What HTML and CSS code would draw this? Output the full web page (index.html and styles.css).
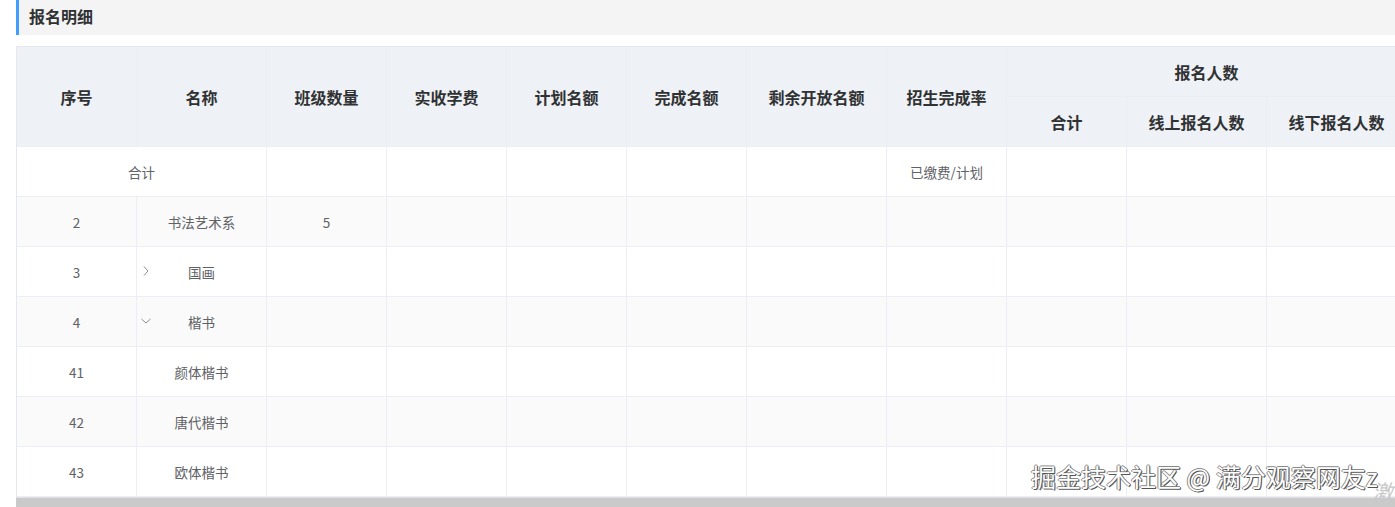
FILE: index.html
```html
<!DOCTYPE html>
<html lang="zh-CN">
<head>
<meta charset="utf-8">
<title>报名明细</title>
<link rel="stylesheet" href="styles.css">
</head>
<body>
<div class="page">
  <div class="title-bar"><span class="title">报名明细</span></div>
  <div class="table-wrap">
    <table class="grid">
      <colgroup>
        <col class="w120"><col class="w130"><col class="w120"><col class="w120"><col class="w120"><col class="w120"><col class="w140"><col class="w120"><col class="w120"><col class="w140"><col class="w140">
      </colgroup>
      <thead>
        <tr>
          <th rowspan="2">序号</th>
          <th rowspan="2">名称</th>
          <th rowspan="2">班级数量</th>
          <th rowspan="2">实收学费</th>
          <th rowspan="2">计划名额</th>
          <th rowspan="2">完成名额</th>
          <th rowspan="2">剩余开放名额</th>
          <th rowspan="2">招生完成率</th>
          <th colspan="3">报名人数</th>
        </tr>
        <tr>
          <th>合计</th>
          <th>线上报名人数</th>
          <th>线下报名人数</th>
        </tr>
      </thead>
      <tbody>
        <tr>
          <td colspan="2">合计</td>
          <td></td><td></td><td></td><td></td><td></td>
          <td>已缴费/计划</td>
          <td></td><td></td><td></td>
        </tr>
        <tr class="stripe">
          <td>2</td>
          <td class="name">书法艺术系</td>
          <td>5</td>
          <td></td><td></td><td></td><td></td><td></td><td></td><td></td><td></td>
        </tr>
        <tr>
          <td>3</td>
          <td class="name"><svg class="chev" width="12" height="12" viewBox="0 0 12 12"><path d="M4 1.5 L8 6 L4 10.5" fill="none" stroke="#8a8d93" stroke-width="1"/></svg>国画</td>
          <td></td><td></td><td></td><td></td><td></td><td></td><td></td><td></td><td></td>
        </tr>
        <tr class="stripe">
          <td>4</td>
          <td class="name"><svg class="chev" width="12" height="12" viewBox="0 0 12 12"><path d="M1.5 4 L6 8 L10.5 4" fill="none" stroke="#8a8d93" stroke-width="1"/></svg>楷书</td>
          <td></td><td></td><td></td><td></td><td></td><td></td><td></td><td></td><td></td>
        </tr>
        <tr>
          <td>41</td>
          <td class="name">颜体楷书</td>
          <td></td><td></td><td></td><td></td><td></td><td></td><td></td><td></td><td></td>
        </tr>
        <tr class="stripe">
          <td>42</td>
          <td class="name">唐代楷书</td>
          <td></td><td></td><td></td><td></td><td></td><td></td><td></td><td></td><td></td>
        </tr>
        <tr>
          <td>43</td>
          <td class="name">欧体楷书</td>
          <td></td><td></td><td></td><td></td><td></td><td></td><td></td><td></td><td></td>
        </tr>
      </tbody>
    </table>
  </div>
  <div class="scrollbar"></div>
</div>
<div class="watermark">掘金技术社区 @ 满分观察网友z</div>
<div class="os-mark">激活</div>
</body>
</html>
```

FILE: styles.css
```css
html, body {
  margin: 0;
  padding: 0;
  background: #ffffff;
  overflow: hidden;
}
body {
  font-family: "Noto Sans CJK SC", "Microsoft YaHei", sans-serif;
  width: 1395px;
  height: 507px;
  position: relative;
}
.page {
  padding-left: 16px;
}
.title-bar {
  height: 35px;
  background: #f4f4f5;
  border-left: 3px solid #409eff;
  display: flex;
  align-items: center;
  padding-left: 10px;
  margin-bottom: 11px;
}
.title {
  font-size: 16px;
  font-weight: 700;
  color: #303133;
  margin-top: -4px;
}
.table-wrap {
  overflow: hidden;
  width: 1379px;
}
.grid {
  border-collapse: separate;
  border-spacing: 0;
  table-layout: fixed;
  width: 1390px;
  border-top: 1px solid #e4e7ed;
  border-left: 1px solid #e4e7ed;
}
.w120 { width: 120px; }
.w130 { width: 130px; }
.w140 { width: 140px; }
.grid th,
.grid td {
  border-right: 1px solid #ebeef5;
  border-bottom: 1px solid #ebeef5;
  padding: 0;
  text-align: center;
  box-sizing: border-box;
}
.grid thead tr {
  height: 50px;
}
.grid th {
  background: #eef1f6;
  font-size: 16px;
  font-weight: 700;
  color: #303133;
}
.grid tbody tr {
  height: 50px;
}
.grid td {
  font-size: 13.5px;
  color: #606266;
  background: #ffffff;
}
.grid tr.stripe td {
  background: #fafafa;
}
.grid td.name {
  position: relative;
}
.chev {
  position: absolute;
  left: 3px;
  top: 18px;
}
.scrollbar {
  height: 12px;
  background: #cacaca;
  border-top: 1px solid #e2e2e2;
}
.watermark {
  position: absolute;
  left: 1031px;
  top: 458px;
  font-size: 25px;
  color: #ffffff;
  white-space: nowrap;
  text-shadow: 1px 1px 0 #555, -1px 0 0 #888, 0 -1px 0 #888, 1px 0 0 #666;
}
.os-mark {
  position: absolute;
  left: 1372px;
  top: 476px;
  font-size: 21px;
  color: #c8c8c8;
  font-style: italic;
  white-space: nowrap;
}
```
